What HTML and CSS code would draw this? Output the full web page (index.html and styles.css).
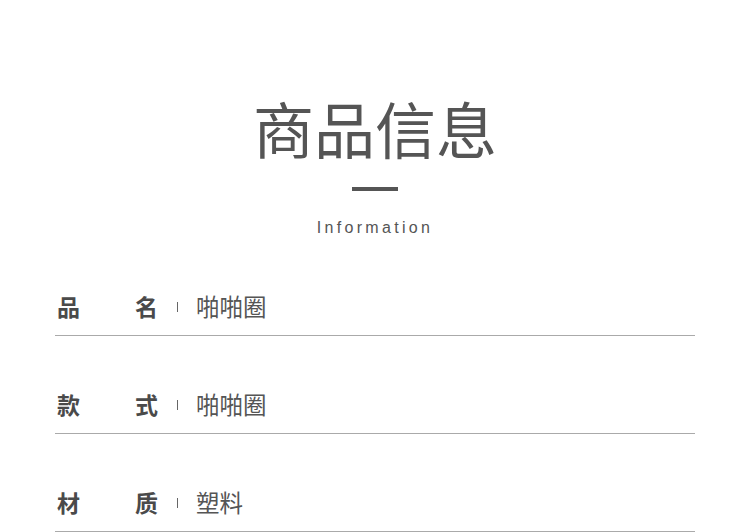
FILE: index.html
```html
<!DOCTYPE html>
<html lang="zh-CN">
<head>
  <meta charset="UTF-8" />
  <title>商品信息</title>
  <link rel="stylesheet" href="styles.css">
</head>
<body>
  <div class="header">
    <h1>商品信息</h1>
    <div class="dash"></div>
    <p class="sub">Information</p>
  </div>

  <div class="list">
    <div class="row">
      <div class="label"><span>品</span><span>名</span></div>
      <i class="sep"></i>
      <div class="value">啪啪圈</div>
    </div>
    <div class="row">
      <div class="label"><span>款</span><span>式</span></div>
      <i class="sep"></i>
      <div class="value">啪啪圈</div>
    </div>
    <div class="row">
      <div class="label"><span>材</span><span>质</span></div>
      <i class="sep"></i>
      <div class="value">塑料</div>
    </div>
  </div>
</body>
</html>
```

FILE: styles.css
```css
body {
  margin: 0;
  background: #fff;
  color: #555;
  font-family: "Noto Sans CJK SC", "Liberation Sans", sans-serif;
}

.header {
  padding-top: 97px;
  text-align: center;
}

h1 {
  margin: 0;
  font-size: 61px;
  line-height: 61px;
  font-weight: 400;
  color: #555;
}

.dash {
  width: 46px;
  height: 4px;
  background: #555;
  margin: 29px auto 0;
}

.sub {
  margin: 27px 0 0;
  font-family: "Liberation Sans", sans-serif;
  font-size: 16px;
  line-height: 20px;
  letter-spacing: 3.3px;
  color: #555;
}

.list {
  margin: 0 55px;
}

.row {
  height: 97px;
  border-bottom: 1px solid #aaa;
  display: flex;
  align-items: flex-end;
}

.row > * {
  margin-bottom: 14px;
}

.label {
  width: 101px;
  padding-left: 2px;
  display: flex;
  justify-content: space-between;
  font-size: 23px;
  line-height: 30px;
  font-weight: 700;
  color: #4a4a4a;
}

.sep {
  width: 1px;
  height: 10px;
  background: #666;
  margin: 0 18px 23px 19px;
}

.value {
  font-size: 23.5px;
  line-height: 30px;
  color: #555;
}
```
